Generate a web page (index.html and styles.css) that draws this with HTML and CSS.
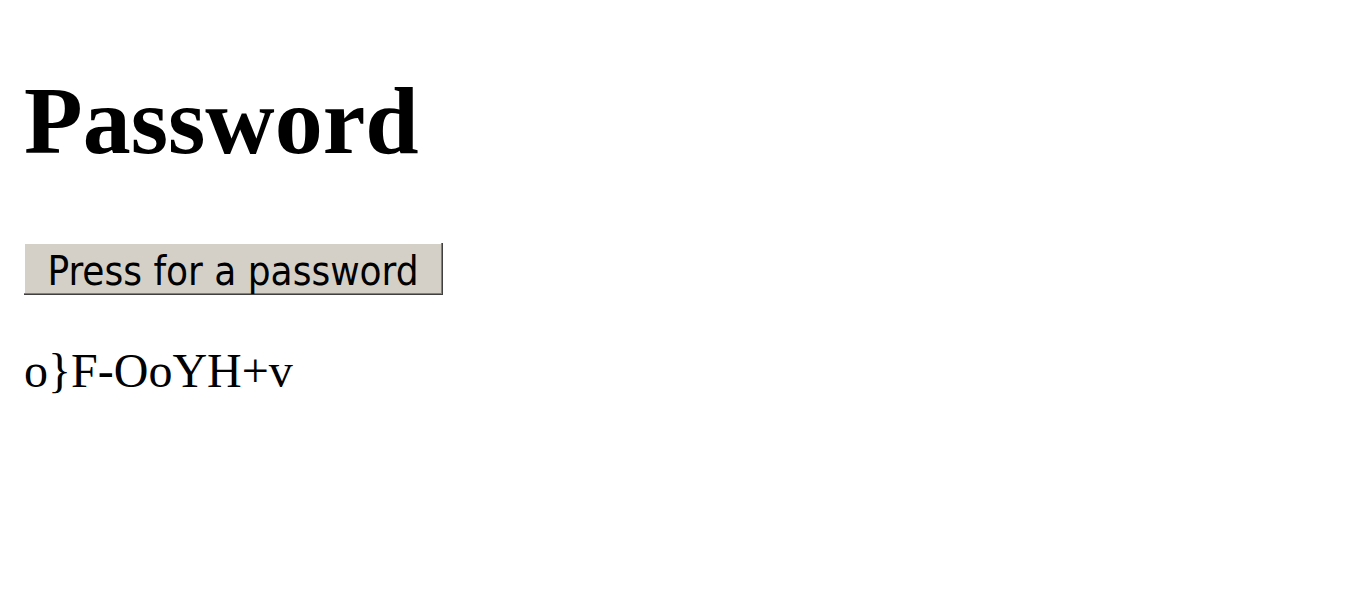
FILE: index.html
```html
<!DOCTYPE html>
<html>
<head>
<meta charset="utf-8">
<title>Password</title>
<link rel="stylesheet" href="styles.css">
</head>
<body>
<h1 class="title">Password</h1>
<div class="controls">
  <button class="gen-btn" type="button">Press for a password</button>
</div>
<p class="result">o}F-OoYH+v</p>
</body>
</html>
```
FILE: styles.css
```css
html, body {
  margin: 0;
  padding: 0;
  background: #ffffff;
}
body {
  padding: 0 24px;
  font-family: "Liberation Serif", "Times New Roman", serif;
  color: #000;
}
.title {
  font-family: "Liberation Serif", "Times New Roman", serif;
  font-size: 96px;
  font-weight: bold;
  line-height: 110px;
  margin: 0;
  padding-top: 66px;
}
.controls {
  margin-top: 67px;
  display: flex;
}
.gen-btn {
  box-sizing: border-box;
  width: 419px;
  height: 52px;
  padding: 4px 0 0;
  margin: 0;
  background: #d4d0c8;
  color: #000;
  font-family: Tahoma, "DejaVu Sans Condensed", "DejaVu Sans", sans-serif;
  font-size: 40px;
  line-height: 1;
  border: none;
  border-right: 1px solid #404040;
  border-bottom: 1px solid #404040;
  box-shadow: inset -1px -1px 0 #808080, inset 1px 1px 0 #ffffff;
  border-radius: 0;
}
.result {
  margin: 48px 0 0;
  font-size: 48px;
  line-height: 55px;
}
```
